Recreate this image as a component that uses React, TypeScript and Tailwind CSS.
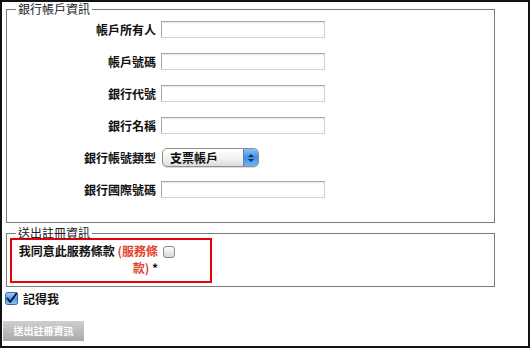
const cjk = { fontFamily: '"Noto Sans CJK TC", "Noto Sans CJK SC", sans-serif' }

const rows = ['帳戶所有人', '帳戶號碼', '銀行代號', '銀行名稱', '銀行帳號類型', '銀行國際號碼']

function TextInput() {
  return (
    <input
      type="text"
      className="w-[164px] h-[17px] bg-white border border-[#a8a8a8] border-b-[#d4d4d4] border-r-[#d0d0d0] shadow-[inset_0_1px_1px_rgba(0,0,0,0.08)] outline-none"
    />
  )
}

function MacSelect() {
  return (
    <div className="ml-px w-[97px] h-[19px] flex items-center rounded-[5px] border border-[#8e8e8e] bg-gradient-to-b from-white via-[#f4f4f4] to-[#dcdcdc] shadow-[0_1px_1px_rgba(0,0,0,0.15)] overflow-hidden">
      <span className="flex-1 pl-[7px] text-[12px] leading-[17px] font-bold text-[#111]">支票帳戶</span>
      <span className="w-[15px] h-full flex flex-col items-center justify-center gap-[2px] bg-gradient-to-b from-[#8fc0f4] via-[#3d8ee8] to-[#6fb3f6] border-l border-[#5a7fb0]">
        <svg width="6" height="3" viewBox="0 0 6 3"><path d="M0 3 L3 0 L6 3 Z" fill="#1a2a44" /></svg>
        <svg width="6" height="3" viewBox="0 0 6 3"><path d="M0 0 L3 3 L6 0 Z" fill="#1a2a44" /></svg>
      </span>
    </div>
  )
}

function EmptyBox() {
  return (
    <svg width="12" height="12" viewBox="0 0 12 12">
      <defs>
        <linearGradient id="gb" x1="0" y1="0" x2="0" y2="1">
          <stop offset="0" stopColor="#ffffff" />
          <stop offset="1" stopColor="#d6d6d6" />
        </linearGradient>
      </defs>
      <rect x="0.5" y="0.5" width="11" height="11" rx="2.5" fill="url(#gb)" stroke="#8a8a8a" />
    </svg>
  )
}

function CheckedBox() {
  return (
    <svg width="13" height="13" viewBox="0 0 13 13">
      <defs>
        <linearGradient id="bb" x1="0" y1="0" x2="0" y2="1">
          <stop offset="0" stopColor="#a9d2fb" />
          <stop offset="0.5" stopColor="#4b9bea" />
          <stop offset="1" stopColor="#8cc4f8" />
        </linearGradient>
      </defs>
      <rect x="0.5" y="0.5" width="12" height="12" rx="2" fill="url(#bb)" stroke="#3a66a0" />
      <path d="M2.5 6.5 L5.2 10 L11.5 1.5" fill="none" stroke="#0d1a2e" strokeWidth="2" strokeLinecap="round" strokeLinejoin="round" />
    </svg>
  )
}

export default function App() {
  return (
    <div className="w-[530px] h-[348px] bg-white border-2 border-[#111] overflow-hidden text-[#111]" style={cjk}>
      <fieldset className="ml-[4px] w-[489px] border border-[#7d7d7d] pb-[24px]">
        <legend className="ml-[9px] px-[2px] text-[12px] leading-[14px] text-[#222]">銀行帳戶資訊</legend>
        <div className="pt-[5px] flex flex-col gap-[15px]">
          {rows.map((label, i) => (
            <div key={label} className="h-[17px] flex items-center">
              <label className="w-[154px] pr-[5px] text-right text-[12px] leading-[17px] font-bold whitespace-nowrap">
                {label}
              </label>
              {i === 4 ? <MacSelect /> : <TextInput />}
            </div>
          ))}
        </div>
      </fieldset>

      <fieldset className="ml-[4px] mt-[4px] w-[489px] border border-[#7d7d7d] pb-[3px]">
        <legend className="ml-[9px] px-[2px] text-[12px] leading-[12px] text-[#222]">送出註冊資訊</legend>
        <div className="-mt-px ml-[3px] w-[202px] h-[45px] border-2 border-[#e8000b] pl-[5px] pt-[2px] flex items-start">
          <label className="w-[141px] text-right text-[12px] leading-[17px] font-bold">
            我同意此服務條款 <span className="text-[#e2452f]">(服務條</span>
            <br />
            <span className="text-[#e2452f]">款)</span> *
          </label>
          <span className="ml-[5px] mt-[4px] flex">
            <EmptyBox />
          </span>
        </div>
      </fieldset>

      <div className="mt-[3px] ml-[3px] flex items-center gap-[5px] h-[17px]">
        <CheckedBox />
        <span className="text-[12px] leading-[17px] font-bold">記得我</span>
      </div>

      <button className="mt-[14px] ml-[1px] w-[81px] h-[20px] bg-gradient-to-b from-[#cfcfcf] to-[#a9a9a9] text-white text-[10px] font-bold leading-[20px] text-center">
        送出註冊資訊
      </button>
    </div>
  )
}
